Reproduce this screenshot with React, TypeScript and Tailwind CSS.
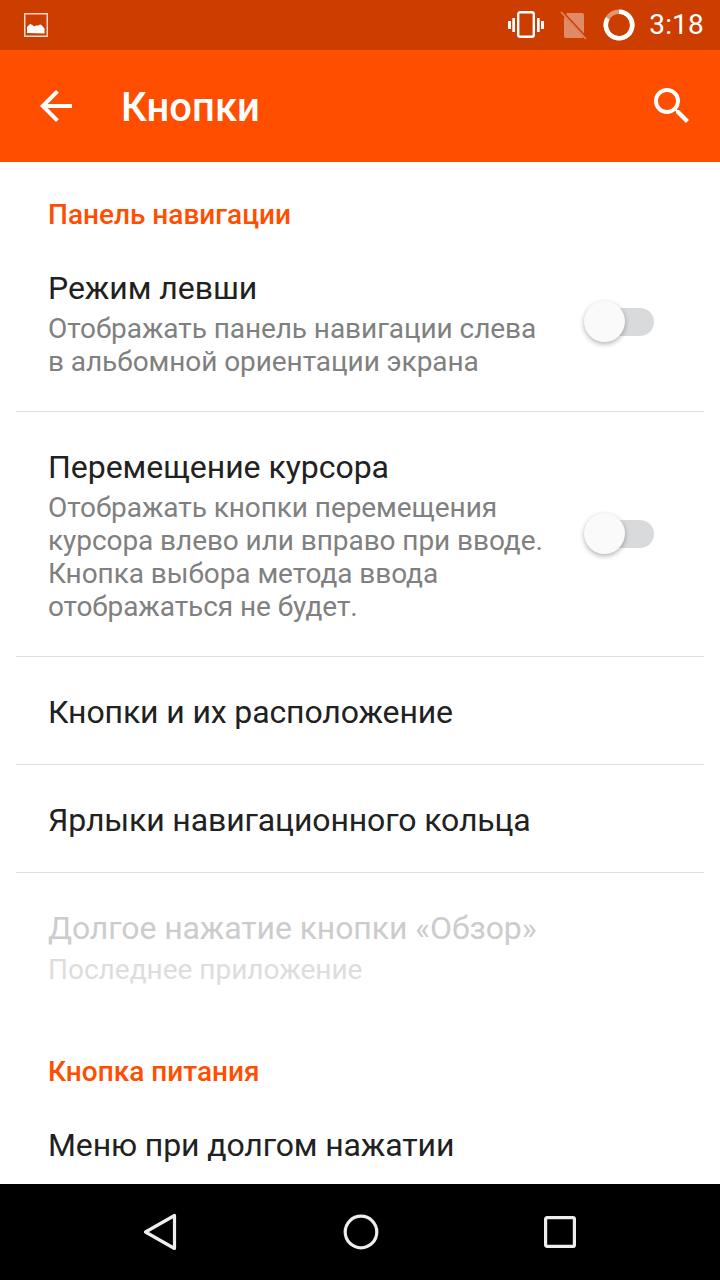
import React from 'react';

function SectionTitle({ children, className }: { children: React.ReactNode; className: string }) {
  return <div className={`px-12 text-[28px] leading-[32px] font-medium text-[#ff4e00] ${className}`}>{children}</div>;
}

function Toggle() {
  return (
    <div className="relative w-[70px] h-[42px] -mt-[2px] shrink-0 flex items-center justify-end">
      <div className="w-[58px] h-[28px] rounded-full bg-[#d9dadb]" />
      <div className="absolute left-0 top-0 w-[41px] h-[41px] rounded-full bg-[#fafafa] shadow-[0_2px_5px_rgba(0,0,0,0.3)]" />
    </div>
  );
}

function SwitchRow({ title, lines, className }: { title: string; lines: string[]; className: string }) {
  return (
    <div className={`flex items-center pl-8 pr-[50px] border-b border-[#e0e0e0] ${className}`}>
      <div className="flex-1 min-w-0">
        <div className="text-[32px] leading-[40px] tracking-[-0.04px] text-[#212121] whitespace-nowrap">{title}</div>
        <div className="mt-1 text-[28px] leading-[33px] tracking-[-0.07px] text-[#808080] whitespace-nowrap">
          {lines.map((l) => (
            <div key={l}>{l}</div>
          ))}
        </div>
      </div>
      <Toggle />
    </div>
  );
}

function PlainRow({ title }: { title: string }) {
  return (
    <div className="h-[108px] pt-[2px] flex items-center px-8 border-b border-[#e0e0e0] text-[32px] tracking-[-0.12px] text-[#212121]">{title}</div>
  );
}

export default function App() {
  return (
    <div className="w-[720px] h-[1280px] flex flex-col overflow-hidden bg-white font-['Roboto',sans-serif]">
      {/* status bar */}
      <div className="h-[50px] shrink-0 bg-[#cc3d00] flex items-center pl-6 pr-4 text-white">
        <svg width="24" height="24" viewBox="0 0 24 24" fill="none">
          <rect x="0.75" y="0.75" width="22.5" height="22.5" stroke="#f5d8cc" strokeWidth="1.5" />
          <path d="M3 20v-6l3-3 2.5 1 1.5 1.5 2-1 2.5 0 1.5-1 1.5.5 3 3.5v5z" fill="#fff" />
        </svg>
        <div className="flex-1" />
        <svg width="36" height="30" viewBox="0 0 36 30" fill="none" className="mr-4">
          <rect x="10.2" y="2.2" width="15.6" height="24.6" rx="2" stroke="#fff" strokeWidth="2.4" />
          <rect x="4.3" y="8" width="2.7" height="14" fill="#fff" />
          <rect x="29" y="8" width="2.7" height="14" fill="#fff" />
          <rect x="0" y="11" width="3" height="8" fill="#fff" />
          <rect x="33" y="11" width="3" height="8" fill="#fff" />
        </svg>
        <svg width="28" height="30" viewBox="0 0 28 30" className="mr-[15px]">
          <path d="M7 3h15a2 2 0 0 1 2 2v21a2 2 0 0 1-2 2H6a2 2 0 0 1-2-2V8z" fill="#fff" fillOpacity="0.4" />
          <path d="M1 1l26 28" stroke="#cc3d00" strokeWidth="3" />
          <path d="M1 2l25 27" stroke="#fff" strokeOpacity="0.4" strokeWidth="1.6" />
        </svg>
        <svg width="32" height="32" viewBox="0 0 32 32" fill="none" className="mr-[14px]">
          <circle cx="16" cy="16" r="13.2" stroke="#fff" strokeOpacity="0.45" strokeWidth="4.6" />
          <path d="M16 2.8a13.2 13.2 0 1 1-11.4 6.6" stroke="#fff" strokeWidth="4.6" />
        </svg>
        <span className="text-[28px] leading-none font-normal tracking-[0.2px]">3:18</span>
      </div>

      {/* app bar */}
      <div className="h-[112px] shrink-0 bg-[#ff4e00] flex items-center pl-8 pr-6 text-white">
        <svg width="48" height="48" viewBox="0 0 24 24" fill="#fff" className="shrink-0">
          <path d="M20 11H7.83l5.59-5.59L12 4l-8 8 8 8 1.41-1.41L7.83 13H20v-2z" />
        </svg>
        <div className="ml-[41px] pt-1 flex-1 text-[40px] font-medium">Кнопки</div>
        <svg width="48" height="48" viewBox="0 0 24 24" fill="#fff" className="shrink-0">
          <path d="M15.5 14h-.79l-.28-.27A6.47 6.47 0 0 0 16 9.5 6.5 6.5 0 1 0 9.5 16c1.61 0 3.09-.59 4.23-1.57l.27.28v.79l5 4.99L20.49 19l-4.99-5zm-6 0C7.01 14 5 11.99 5 9.5S7.01 5 9.5 5 14 7.01 14 9.5 11.99 14 9.5 14z" />
        </svg>
      </div>

      {/* list */}
      <div className="flex-1 min-h-0 overflow-hidden">
        <SectionTitle className="pt-[37px]">Панель навигации</SectionTitle>
        <div className="mx-4">
          <SwitchRow
            className="h-[181px] pt-1"
            title="Режим левши"
            lines={['Отображать панель навигации слева', 'в альбомной ориентации экрана']}
          />
          <SwitchRow
            className="h-[245px] pt-[2px]"
            title="Перемещение курсора"
            lines={[
              'Отображать кнопки перемещения',
              'курсора влево или вправо при вводе.',
              'Кнопка выбора метода ввода',
              'отображаться не будет.',
            ]}
          />
          <PlainRow title="Кнопки и их расположение" />
          <PlainRow title="Ярлыки навигационного кольца" />
          <div className="h-[116px] pt-[35px] px-8">
            <div className="text-[32px] leading-[40px] tracking-[-0.1px] text-[#cccccc]">Долгое нажатие кнопки «Обзор»</div>
            <div className="text-[28px] leading-[33px] text-[#dddddd] mt-[5px]">Последнее приложение</div>
          </div>
        </div>
        <SectionTitle className="pt-[67px]">Кнопка питания</SectionTitle>
        <div className="px-12 pt-[37px] text-[32px] leading-[40px] tracking-[-0.12px] text-[#212121] whitespace-nowrap">Меню при долгом нажатии</div>
      </div>

      {/* nav bar */}
      <div className="h-[96px] shrink-0 bg-black flex items-center justify-center">
        <div className="w-[480px] flex items-center justify-between pl-[23px] pr-[24px]">
          <svg width="34" height="38" viewBox="0 0 34 38" fill="none">
            <path d="M31.5 2.5v33L2.5 19z" stroke="#eeeeee" strokeWidth="3.2" strokeLinejoin="round" />
          </svg>
          <svg width="36" height="36" viewBox="0 0 36 36" fill="none">
            <circle cx="18" cy="18" r="15.8" stroke="#eeeeee" strokeWidth="3.2" />
          </svg>
          <svg width="32" height="32" viewBox="0 0 32 32" fill="none">
            <rect x="1.6" y="1.6" width="28.8" height="28.8" rx="1.5" stroke="#eeeeee" strokeWidth="3.2" />
          </svg>
        </div>
      </div>
    </div>
  );
}
